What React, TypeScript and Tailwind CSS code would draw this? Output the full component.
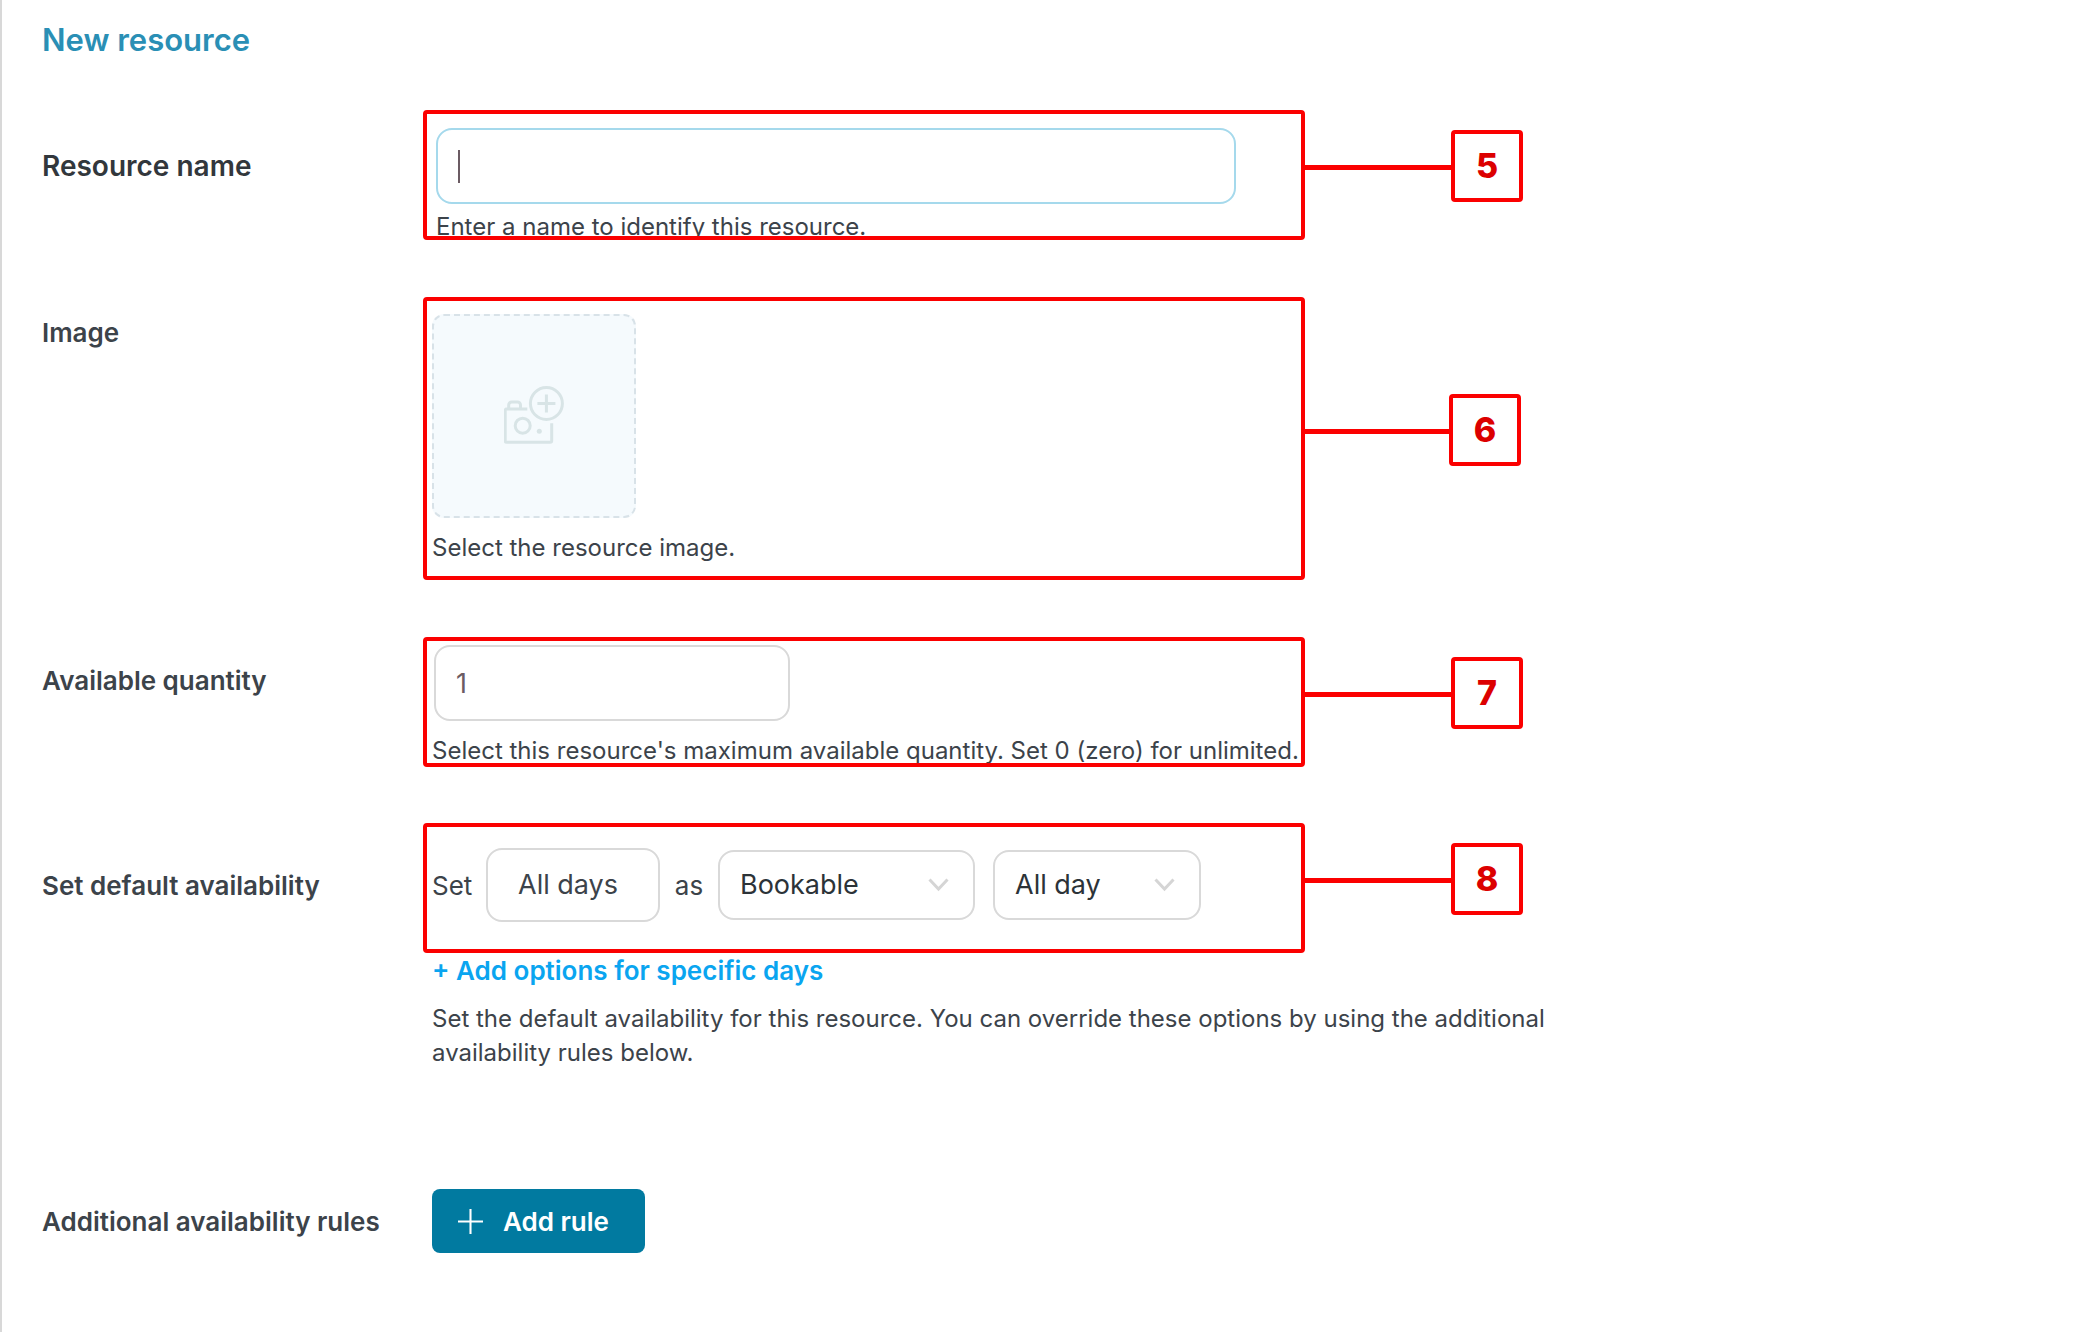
import React from "react";
import { clsx } from "clsx";

const controlStyle = "rounded-2xl border-2 border-[#d9d9d9] bg-white";
const helpStyle = "text-2xl leading-[34px] text-[#3c434a]";

function Callout({
  number,
  className,
  badgeStyle = "mt-5",
  lineStyle = "mt-[55px] w-[146px]",
}: {
  number: number;
  className: string;
  badgeStyle?: string;
  lineStyle?: string;
}) {
  return (
    <div className={clsx("pointer-events-none absolute -left-[9px] flex items-start", className)}>
      <div className="h-full w-[882px] rounded border-4 border-[#fb0000]"></div>
      <div className={clsx("h-[5px] bg-[#fb0000]", lineStyle)}></div>
      <div
        className={clsx(
          "flex size-[72px] items-center justify-center rounded border-4 border-[#fb0000] font-['Inter',sans-serif] text-[34px] leading-none font-extrabold text-[#dc0000]",
          badgeStyle
        )}
      >
        {number}
      </div>
    </div>
  );
}

function Row({
  label,
  htmlFor,
  className,
  labelStyle,
  children,
}: {
  label: string;
  htmlFor: string;
  className: string;
  labelStyle: string;
  children: React.ReactNode;
}) {
  return (
    <div className={clsx("flex items-start", className)}>
      <label
        htmlFor={htmlFor}
        className={clsx("w-[390px] shrink-0 font-semibold", labelStyle)}
      >
        {label}
      </label>
      <div className="relative min-w-0 flex-1">{children}</div>
    </div>
  );
}

function Select({ label, options, className }: { label: string; options: string[]; className: string }) {
  return (
    <div className={clsx("relative", className)}>
      <select
        aria-label={label}
        className={clsx(controlStyle, "block h-[70px] w-full appearance-none pl-5 text-[27px] text-[#2c3338]")}
      >
        {options.map((option) => (
          <option key={option}>{option}</option>
        ))}
      </select>
      <svg
        className="pointer-events-none absolute top-7 right-[26px] h-[14px] w-[21px]"
        viewBox="0 0 21 14"
        fill="none"
        stroke="#d5d5d5"
        strokeWidth="3"
      >
        <path d="M1.500 1.500l9 9.500 9-9.500" />
      </svg>
    </div>
  );
}

function CameraIcon() {
  return (
    <svg className="size-[60px]" viewBox="0 0 60 60" fill="none" stroke="#d8e4e6" strokeWidth="3">
      <path d="M23.300 23H2.700a1.500 1.500 0 0 0-1.500 1.500v30.300a1.500 1.500 0 0 0 1.500 1.500h43.500a1.500 1.500 0 0 0 1.500-1.500V37.300" />
      <path d="M4.700 23v-4a3 3 0 0 1 3-3h5.800a3 3 0 0 1 3 3v4" />
      <circle cx="18.700" cy="39.700" r="7.500" />
      <circle cx="35.300" cy="45.300" r="2.500" fill="#d8e4e6" stroke="none" />
      <circle cx="42.400" cy="17.500" r="16" />
      <path d="M42.400 8.500v18M33.400 17.500h18" />
    </svg>
  );
}

export default function App() {
  return (
    <main className="min-h-screen border-l-2 border-[#d8d8d8] bg-white pt-5 pl-10 font-['Inter',sans-serif]">
      <h1 className="text-[31px] leading-10 font-semibold text-[#2a8fb5]">New resource</h1>

      <Row
        label="Resource name"
        htmlFor="resource-name"
        className="mt-[68px]"
        labelStyle="text-[28px] leading-[76px] text-[#32373c]"
      >
        <div className="relative ml-1 w-[800px]">
          <input
            id="resource-name"
            type="text"
            className="block h-[76px] w-full rounded-2xl border-2 border-[#a5d9ec] bg-white px-5 text-[27px] text-[#6b5b63] outline-none"
          />
          {/* text cursor */}
          <span className="absolute top-[22px] left-[22px] h-[33px] w-0.5 bg-[#6b5b63]"></span>
        </div>
        <p className={clsx(helpStyle, "mt-[6px] ml-1")}>Enter a name to identify this resource.</p>
        <Callout number={5} className="-top-[18px] h-[130px]" />
      </Row>

      <Row
        label="Image"
        htmlFor="resource-image"
        className="mt-[70px]"
        labelStyle="text-[26px] leading-[38px] text-[#3c434a]"
      >
        <button
          id="resource-image"
          type="button"
          aria-label="Image"
          className="flex size-[204px] items-center justify-center rounded-xl border-2 border-dashed border-[#d8e2e8] bg-[#f5fafd]"
        >
          <CameraIcon />
        </button>
        <p className={clsx(helpStyle, "mt-[13px]")}>Select the resource image.</p>
        <Callout
          number={6}
          className="-top-[17px] h-[283px]"
          badgeStyle="mt-[97px]"
          lineStyle="mt-[132px] w-36"
        />
      </Row>

      <Row
        label="Available quantity"
        htmlFor="quantity"
        className="mt-20"
        labelStyle="text-[26px] leading-[72px] text-[#3c434a]"
      >
        <input
          id="quantity"
          type="text"
          inputMode="numeric"
          defaultValue="1"
          className={clsx(controlStyle, "ml-0.5 block h-[76px] w-[356px] px-5 text-[27px] text-[#6b5b63]")}
        />
        <p className={clsx(helpStyle, "mt-[13px]")}>
          Select this resource's maximum available quantity. Set 0 (zero) for unlimited.
        </p>
        <Callout number={7} className="-top-2 h-[130px]" />
      </Row>

      <Row
        label="Set default availability"
        htmlFor="default-days"
        className="mt-20"
        labelStyle="text-[26px] leading-[76px] text-[#3c434a]"
      >
        <div className="flex items-center text-[26px] text-[#3c434a]">
          <span className="w-[54px]">Set</span>
          <button
            id="default-days"
            type="button"
            className={clsx(controlStyle, "h-[74px] w-[174px] pl-[30px] text-left text-[27px]")}
          >
            All days
          </button>
          <span className="w-[58px] text-center">as</span>
          <Select label="Availability" options={["Bookable", "Not bookable"]} className="w-[257px]" />
          <Select label="Hours" options={["All day", "Set hours"]} className="ml-[18px] w-52" />
        </div>
        <a href="#" className="mt-8 block w-fit text-[26px] leading-[34px] font-semibold text-[#0aa5f0]">
          + Add options for specific days
        </a>
        <p className={clsx(helpStyle, "mt-[14px] max-w-[1130px]")}>
          Set the default availability for this resource. You can override these options by using the additional
          availability rules below.
        </p>
        <Callout number={8} className="-top-[25px] h-[130px]" />
      </Row>

      <Row
        label="Additional availability rules"
        htmlFor="add-rule"
        className="mt-[119px]"
        labelStyle="text-[26px] leading-[66px] text-[#3c434a]"
      >
        <button
          id="add-rule"
          type="button"
          className="flex h-16 w-[213px] items-center gap-5 rounded-lg bg-[#017aa0] pl-[26px] text-[26px] font-semibold text-white"
        >
          <svg className="size-[25px]" viewBox="0 0 24 24" fill="none" stroke="currentColor" strokeWidth="2">
            <path d="M12 0v24M0 12h24" />
          </svg>
          Add rule
        </button>
      </Row>
    </main>
  );
}
